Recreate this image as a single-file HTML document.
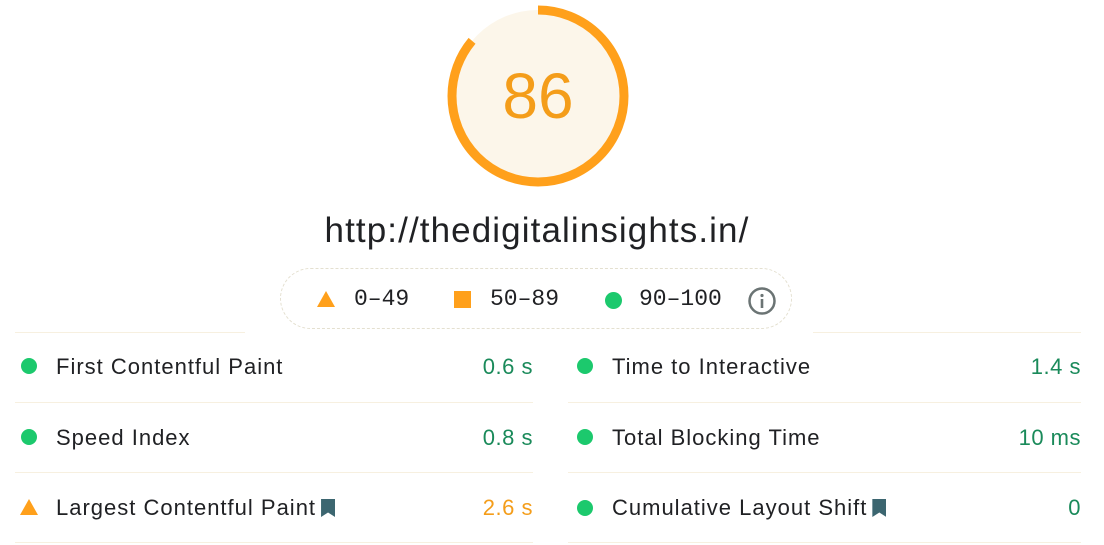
<!DOCTYPE html>
<html><head><style>
body{margin:0;width:1104px;height:545px;background:#fff;font-family:"Liberation Sans",sans-serif;position:relative;overflow:hidden;color:#212121}
.url{position:absolute;top:211px;left:0;width:1074px;text-align:center;font-size:35px;letter-spacing:1.1px;color:#202124}
.legend{position:absolute;left:280px;top:268px;width:512px;height:61px;border:1px dashed #e4e0d0;border-radius:31px;box-sizing:border-box}
.lg{position:absolute;top:17px;font-family:"Liberation Mono",monospace;font-size:23px;color:#202124}
.line{position:absolute;height:1px;background:#f7f0e0}
.row{position:absolute;font-size:22px;letter-spacing:1px;color:#202124}
.val{position:absolute;font-size:22px;letter-spacing:0.5px;text-align:right}
.g{color:#1a8a5a}.o{color:#f49d1a}
.dot{position:absolute;width:16px;height:16px;border-radius:50%;background:#1cc96d}
.tri{position:absolute;width:0;height:0;border-left:9px solid transparent;border-right:9px solid transparent;border-bottom:16px solid #ffa01b}
.bm{display:inline-block;width:14px;height:18px;background:#3c6670;vertical-align:-2px;margin-left:5px;clip-path:polygon(0 0,100% 0,100% 100%,50% 75%,0 100%)}
</style></head><body>
<svg style="position:absolute;left:447px;top:5px" width="182" height="182" viewBox="0 0 182 182">
<circle cx="91" cy="91" r="86" fill="#fcf6ea"/>
<circle cx="91" cy="91" r="86" fill="none" stroke="#ffa01b" stroke-width="9" stroke-dasharray="465 540" transform="rotate(-90 91 91)"/>
<text x="91" y="113" text-anchor="middle" font-family="Liberation Sans" font-size="64" fill="#f49d1a">86</text>
</svg>
<div class="url">http://thedigitalinsights.in/</div>
<div class="legend">
<div class="tri" style="left:36px;top:22px"></div><div class="lg" style="left:73px">0–49</div>
<div style="position:absolute;left:173px;top:22px;width:17px;height:17px;background:#ffa01b"></div><div class="lg" style="left:209px">50–89</div>
<div class="dot" style="left:324px;top:23px;width:17px;height:17px"></div><div class="lg" style="left:358px">90–100</div>
<svg style="position:absolute;left:466px;top:17px" width="30" height="30" viewBox="0 0 30 30"><circle cx="15" cy="15" r="12.5" fill="none" stroke="#6b7474" stroke-width="2.5"/><rect x="13.7" y="13" width="2.6" height="9" fill="#6b7474"/><circle cx="15" cy="9.5" r="1.6" fill="#6b7474"/></svg>
</div>
<div class="line" style="left:15px;top:332px;width:230px"></div>
<div class="line" style="left:813px;top:332px;width:268px"></div>
<div class="line" style="left:15px;top:402px;width:518px"></div>
<div class="line" style="left:568px;top:402px;width:513px"></div>
<div class="line" style="left:15px;top:472px;width:518px"></div>
<div class="line" style="left:568px;top:472px;width:513px"></div>
<div class="line" style="left:15px;top:542px;width:518px"></div>
<div class="line" style="left:568px;top:542px;width:513px"></div>

<div class="dot" style="left:21px;top:358px"></div><div class="row" style="left:56px;top:354px">First Contentful Paint</div><div class="val g" style="right:571px;top:354px">0.6 s</div>
<div class="dot" style="left:21px;top:429px"></div><div class="row" style="left:56px;top:425px">Speed Index</div><div class="val g" style="right:571px;top:425px">0.8 s</div>
<div class="tri" style="left:20px;top:499px"></div><div class="row" style="left:56px;top:495px">Largest Contentful Paint<span class="bm"></span></div><div class="val o" style="right:571px;top:495px">2.6 s</div>

<div class="dot" style="left:577px;top:358px"></div><div class="row" style="left:612px;top:354px">Time to Interactive</div><div class="val g" style="right:23px;top:354px">1.4 s</div>
<div class="dot" style="left:577px;top:429px"></div><div class="row" style="left:612px;top:425px">Total Blocking Time</div><div class="val g" style="right:23px;top:425px">10 ms</div>
<div class="dot" style="left:577px;top:500px"></div><div class="row" style="left:612px;top:495px">Cumulative Layout Shift<span class="bm"></span></div><div class="val g" style="right:23px;top:495px">0</div>
</body></html>
